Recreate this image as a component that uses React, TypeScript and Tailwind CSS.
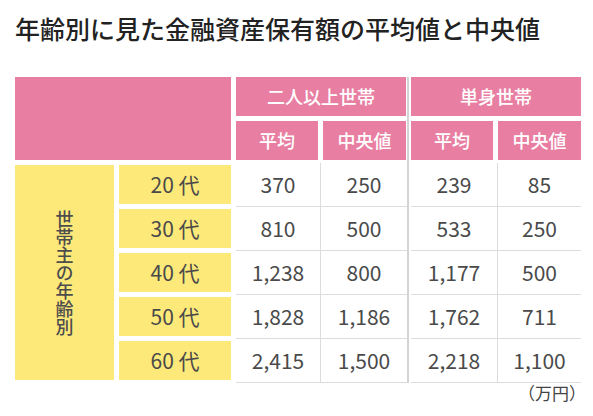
import React from 'react';

const jp = { fontFamily: '"Noto Sans CJK JP", "Noto Sans", sans-serif' };

const ages = ['20', '30', '40', '50', '60'];
const rows = [
  ['370', '250', '239', '85'],
  ['810', '500', '533', '250'],
  ['1,238', '800', '1,177', '500'],
  ['1,828', '1,186', '1,762', '711'],
  ['2,415', '1,500', '2,218', '1,100'],
];

const Group: React.FC<{ title: string; data: string[][]; first?: boolean }> = ({ title, data, first }) => (
  <div className={first ? 'flex flex-col w-[171px]' : 'flex flex-col w-[172px] pl-[2px]'}>
    <div className="h-[39px] w-[170px] bg-[#e87fa3] text-white text-[18px] font-medium flex items-center justify-center">
      {title}
    </div>
    <div className="flex gap-[5px] mt-[5px] text-white text-[18px] font-medium">
      <div className="h-[39px] w-[82px] bg-[#e87fa3] flex items-center justify-center">平均</div>
      <div className="h-[39px] w-[83px] bg-[#e87fa3] flex items-center justify-center">中央値</div>
    </div>
    <div className="flex flex-col mt-[3px]">
      {data.map((r, i) => (
        <div key={i} className="flex h-[44px] border-b border-[#dcdcdc] text-[21px] text-[#4a4a4a]">
          <div className={(first ? 'w-[85px]' : 'w-[87px]') + ' border-r border-[#dcdcdc] flex items-center justify-center'}>
            {r[0]}
          </div>
          <div className="flex-1 flex items-center justify-center">{r[1]}</div>
        </div>
      ))}
    </div>
  </div>
);

export default function App() {
  return (
    <div className="w-[593px] h-[416px] bg-white overflow-hidden" style={jp}>
      <h1 className="pl-[15px] pt-[11px] text-[25px] leading-[34px] font-medium text-[#222]">
        年齢別に見た金融資産保有額の平均値と中央値
      </h1>

      <div className="flex ml-[15px] mt-[32px] gap-[5px]">
        <div className="flex flex-col w-[216px]">
          <div className="h-[83px] bg-[#e87fa3]" />
          <div className="flex gap-[5px] mt-[5px]">
            <div className="w-[99px] h-[215px] bg-[#fde97a] flex items-center justify-center">
              <span className="[writing-mode:vertical-rl] text-[18px] leading-none text-[#4d4d4d] font-medium">
                世帯主の年齢別
              </span>
            </div>
            <div className="flex flex-col gap-[5px] w-[112px]">
              {ages.map((a) => (
                <div key={a} className="h-[39px] bg-[#fde97a] flex items-center justify-center text-[21px] text-[#4a4a4a]">
                  {a} 代
                </div>
              ))}
            </div>
          </div>
        </div>

        <div className="flex">
          <Group title="二人以上世帯" data={rows.map((r) => [r[0], r[1]])} first />
          <div className="w-[2px] bg-[#d4d4d4]" />
          <Group title="単身世帯" data={rows.map((r) => [r[2], r[3]])} />
        </div>
      </div>

      <div className="flex justify-end pr-[7px] -mt-[3px] text-[17px] text-[#444]">（万円）</div>
    </div>
  );
}
